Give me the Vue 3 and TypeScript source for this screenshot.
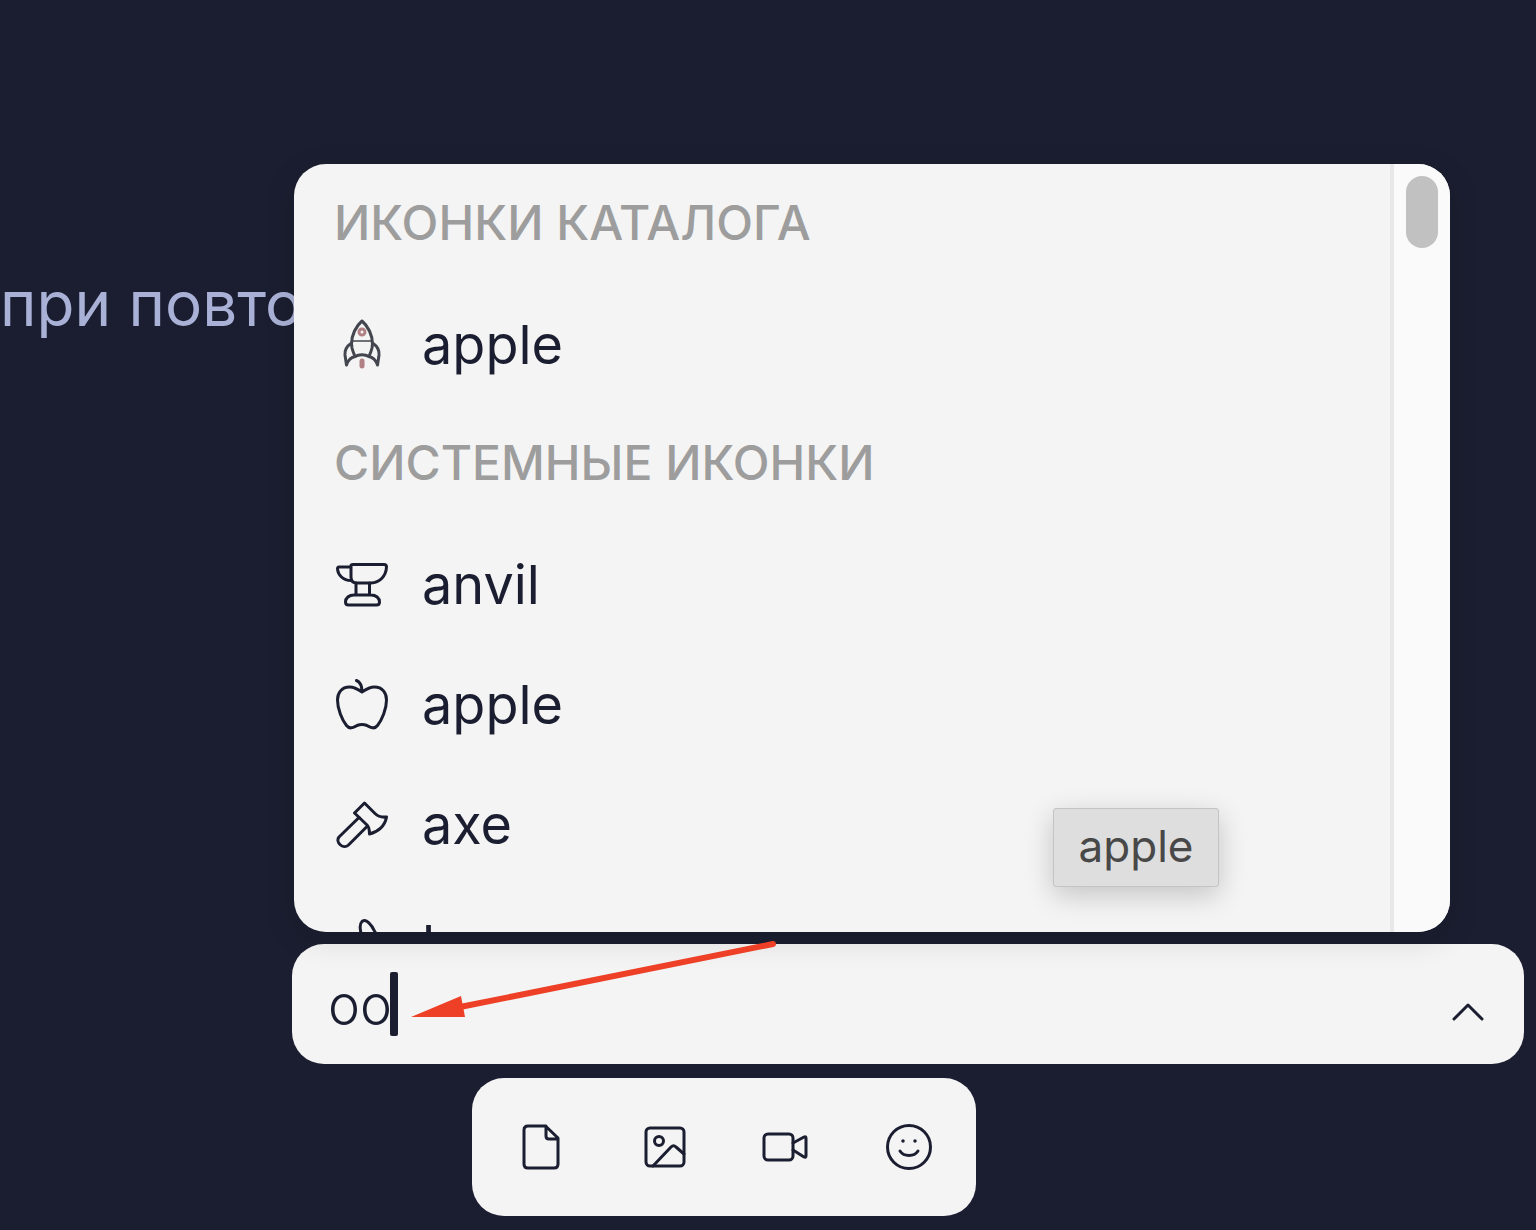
<script setup lang="ts">
import { ref } from 'vue'

type IconName = 'rocket' | 'anvil' | 'apple' | 'axe' | 'banana'

interface IconOption {
  name: string
  icon: IconName
}

interface IconGroup {
  title: string
  options: IconOption[]
}

const query = ref<string>('oo')

const groups: IconGroup[] = [
  { title: 'Иконки каталога', options: [{ name: 'apple', icon: 'rocket' }] },
  {
    title: 'Системные иконки',
    options: [
      { name: 'anvil', icon: 'anvil' },
      { name: 'apple', icon: 'apple' },
      { name: 'axe', icon: 'axe' },
      { name: 'banana', icon: 'banana' },
    ],
  },
]
</script>

<template>
  <main class="page">
    <p class="note">при повто</p>

    <section class="picker">
      <div class="popup">
        <div class="list">
          <section v-for="group in groups" :key="group.title">
            <h2 class="group-title">{{ group.title }}</h2>
            <button v-for="option in group.options" :key="option.name" type="button" class="option">
              <svg v-if="option.icon === 'rocket'" class="icon rocket" viewBox="0 0 52 52" aria-hidden="true">
                <path d="M26 2C20 7 15.500 16 15.500 25L16 29C17 33 18 35 19 37.500C23 35 29 35 33 37.500C34 35 35 33 36 29L36.500 25C36.500 16 32 7 26 2Z" />
                <path d="M15.500 24C11 27 8.500 31 9 36L10.500 46C12 41 15 38.500 19 37.500M36.500 24C41 27 43.500 31 43 36L41.500 46C40 41 37 38.500 33 37.500" />
                <path d="M16 22H36" stroke-width="1.500" />
                <circle cx="26" cy="13" r="3" class="accent" />
                <path d="M26 42V47" class="accent flame" />
              </svg>
              <svg v-else-if="option.icon === 'anvil'" class="icon" viewBox="0 0 52 52" aria-hidden="true">
                <path d="M15 6.500Q15 5.500 17 5.500H48Q50.500 5.500 50.500 8C50 17 44 23.500 35 24H21Q15 24 15 18ZM15 8H3Q1.500 8 1.500 10C2 16 7 21.500 15 21.500" />
                <path d="M20 24V36M33.500 24V36M18 36H35C40 36 43.500 39 43.500 43Q43.500 46 40.500 46H12.500Q9.500 46 9.500 43C9.500 39 13 36 18 36Z" />
              </svg>
              <svg v-else-if="option.icon === 'apple'" class="icon" viewBox="0 0 52 52" aria-hidden="true">
                <path d="M26 13C21 9.500 18 8 13.500 8C5.500 8 1.500 14 1.500 21C1.500 30 6 41 10.500 46.500C14 51 18 48 21 46.500Q26 44.500 31 46.500C34 48 38 51 41.500 46.500C46 41 50.500 30 50.500 21C50.500 14 46.500 8 38.500 8C34 8 31 9.500 26 13ZM26 13C26 8 24 3 20.500 1.500" />
              </svg>
              <svg v-else-if="option.icon === 'axe'" class="icon" viewBox="0 0 52 52" aria-hidden="true">
                <path d="M28.500 4L18.500 14L31 26C33 28 33.500 31 33.500 35C42 33 49 27 50.500 18C46 18.500 42 17.500 39 14.500Z" />
                <path d="M23 18.500L3 38C-1 43 7 51 12.500 46L31.500 27" />
              </svg>
              <svg v-else class="icon" viewBox="0 0 52 52" aria-hidden="true">
                <path d="M25 14C24 10 23.500 5 26 2.500C30 -1 36 6 39 13C44 22 38 36 22 43C14 47 5 47 3 43C2 40 6 39 10 37C20 32 27 24 25 14Z" />
              </svg>
              <span>{{ option.name }}</span>
            </button>
          </section>
        </div>
        <div class="scrollbar" aria-hidden="true"><div class="thumb"></div></div>
        <div class="tooltip" role="tooltip">apple</div>
      </div>

      <div class="field">
        <input v-model="query" class="search" type="text" aria-label="Поиск иконки" />
        <span class="caret" aria-hidden="true"></span>
        <button type="button" class="toggle" aria-label="Свернуть список">
          <svg viewBox="0 0 36 36" width="36" height="36" aria-hidden="true">
            <path d="M4 25L18 11L32 25" />
          </svg>
        </button>
        <svg class="arrow" viewBox="0 0 370 84" aria-hidden="true">
          <path d="M50 68L363 5" fill="none" stroke="#ee4026" stroke-width="6" stroke-linecap="round" />
          <path d="M1 78L51 57L55 78Z" fill="#ee4026" />
        </svg>
      </div>

      <div class="toolbar" role="toolbar" aria-label="Тип вложения">
        <button type="button" aria-label="Файл">
          <svg viewBox="0 0 48 48" aria-hidden="true">
            <path d="M11 3H28.500L41 15V41Q41 45 37 45H11Q7 45 7 41V7Q7 3 11 3M29 3V13Q29 16 32 16H41" />
          </svg>
        </button>
        <button type="button" aria-label="Изображение">
          <svg viewBox="0 0 48 48" aria-hidden="true">
            <rect x="6" y="5" width="38" height="38" rx="4" />
            <circle cx="19" cy="18" r="4.500" />
            <path d="M13 43L31 24Q33.500 21.500 36 24L44 31" />
          </svg>
        </button>
        <button type="button" aria-label="Видео">
          <svg viewBox="0 0 48 48" aria-hidden="true">
            <rect x="2" y="11" width="29" height="26" rx="4" />
            <path d="M31 20L42 14Q44 13 44 15V33Q44 35 42 34L31 27" />
          </svg>
        </button>
        <button type="button" aria-label="Эмодзи">
          <svg viewBox="0 0 48 48" aria-hidden="true">
            <circle cx="24" cy="24" r="21.500" />
            <path d="M15 28C19 34 29 34 33 28" />
            <path d="M18 18V18.100M30 18V18.100" stroke-width="3.500" />
          </svg>
        </button>
      </div>
    </section>
  </main>
</template>

<style>
body {
  background: #1b1e30;
}
</style>

<style scoped>
.page {
  box-sizing: border-box;
  min-height: 100vh;
  padding-top: 264px;
  overflow: hidden;
  background: #1b1e30;
  color: #1b1e30;
  font-family: Inter, 'Liberation Sans', sans-serif;
}

.note {
  height: 80px;
  margin: 0;
  color: #a9b1d6;
  font-size: 62px;
  line-height: 80px;
  white-space: nowrap;
}

.picker {
  position: relative;
  margin: 600px 12px 0 292px;
}

button {
  padding: 0;
  border: 0;
  background: none;
  color: inherit;
  font-family: inherit;
}

svg {
  display: block;
  fill: none;
  stroke: currentColor;
  stroke-width: 3;
  stroke-linecap: round;
  stroke-linejoin: round;
}

.popup {
  position: absolute;
  z-index: 1;
  right: 74px;
  bottom: calc(100% + 12px);
  left: 2px;
  display: flex;
  height: 768px;
  border-radius: 32px;
  background: #f4f4f4;
  box-shadow: 0 8px 32px rgba(0, 0, 0, 0.12);
}

.list {
  flex: 1;
  overflow: hidden;
  border-radius: 32px 0 0 32px;
}

.group-title {
  height: 120px;
  margin: 0;
  padding-left: 40px;
  color: #9d9d9d;
  font-size: 48px;
  font-weight: 500;
  line-height: 118px;
  text-transform: uppercase;
}

.option {
  display: flex;
  align-items: center;
  gap: 34px;
  width: 100%;
  height: 120px;
  padding: 2px 0 0 42px;
  font-size: 54px;
  line-height: 118px;
  text-align: left;
}

.icon {
  flex: none;
  width: 52px;
  height: 52px;
}

.rocket {
  color: #43454f;
}

.accent {
  stroke: #b08084;
}

.flame {
  stroke-width: 5;
}

.scrollbar {
  box-sizing: border-box;
  width: 60px;
  padding: 12px;
  border-left: 4px solid #e8e8e8;
  border-radius: 0 32px 32px 0;
  background: #fafafa;
}

.thumb {
  height: 72px;
  border-radius: 16px;
  background: #c1c1c1;
}

.tooltip {
  position: absolute;
  right: 231px;
  bottom: 45px;
  box-sizing: border-box;
  width: 166px;
  height: 79px;
  border: 1px solid #c4c4c4;
  border-radius: 3px;
  background: #dedede;
  box-shadow: 0 8px 28px rgba(0, 0, 0, 0.2);
  color: #484848;
  font-size: 44px;
  line-height: 74px;
  text-align: center;
}

.field {
  position: relative;
  display: flex;
  align-items: center;
  height: 120px;
  border-radius: 32px;
  background: #f4f4f4;
}

.search {
  box-sizing: border-box;
  flex: 1;
  min-width: 0;
  height: 100%;
  padding: 0 0 0 36px;
  border: 0;
  outline: 0;
  background: transparent;
  color: inherit;
  font-family: inherit;
  font-size: 54px;
  font-weight: 300;
}

.caret {
  position: absolute;
  top: 28px;
  left: 98px;
  width: 8px;
  height: 64px;
  border-radius: 2px;
  background: #1b1e30;
}

.toggle {
  margin: 16px 38px 0 0;
}

.arrow {
  position: absolute;
  z-index: 2;
  top: -5px;
  left: 118px;
  width: 370px;
  height: 84px;
  stroke: none;
}

.toolbar {
  box-sizing: border-box;
  display: flex;
  align-items: center;
  justify-content: space-between;
  width: 504px;
  height: 138px;
  margin: 14px 0 0 180px;
  padding: 0 43px 0 45px;
  border-radius: 32px;
  background: #f4f4f4;
}

.toolbar svg {
  width: 48px;
  height: 48px;
}
</style>
